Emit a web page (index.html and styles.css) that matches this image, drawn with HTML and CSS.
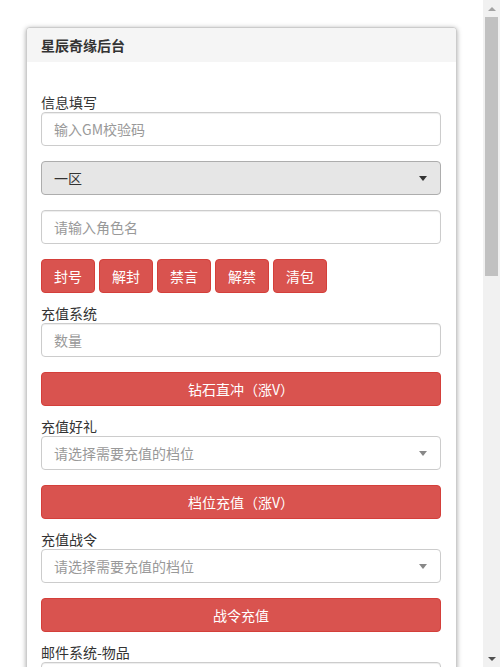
FILE: index.html
```html
<!DOCTYPE html>
<html lang="zh-CN">
<head>
<meta charset="utf-8">
<title>星辰奇缘后台</title>
<link rel="stylesheet" href="styles.css">
</head>
<body>
<div class="wrap">
  <div class="panel">
    <div class="panel-heading">星辰奇缘后台</div>
    <div class="panel-body">
      <label class="lbl">信息填写</label>
      <input class="ctl" type="text" placeholder="输入GM校验码">
      <div class="sel sel-gray"><span>一区</span><i class="caret dark"></i></div>
      <input class="ctl" type="text" placeholder="请输入角色名">
      <div class="btn-row">
        <button class="btn">封号</button>
        <button class="btn">解封</button>
        <button class="btn">禁言</button>
        <button class="btn">解禁</button>
        <button class="btn">清包</button>
      </div>
      <label class="lbl">充值系统</label>
      <input class="ctl" type="text" placeholder="数量">
      <button class="btn btn-block">钻石直冲（涨V）</button>
      <label class="lbl">充值好礼</label>
      <div class="sel"><span class="ph">请选择需要充值的档位</span><i class="caret light"></i></div>
      <button class="btn btn-block">档位充值（涨V）</button>
      <label class="lbl">充值战令</label>
      <div class="sel"><span class="ph">请选择需要充值的档位</span><i class="caret light"></i></div>
      <button class="btn btn-block">战令充值</button>
      <label class="lbl">邮件系统-物品</label>
      <input class="ctl" type="text" placeholder="请输入物品ID">
      <input class="ctl" type="text" placeholder="数量">
      <button class="btn btn-block">发送物品</button>
    </div>
  </div>
</div>
<div class="scrollbar" aria-hidden="true">
  <div class="sb-btn sb-up"><i></i></div>
  <div class="sb-track"><div class="sb-thumb"></div></div>
  <div class="sb-btn sb-down"><i></i></div>
</div>
</body>
</html>
```
FILE: styles.css
```css
html, body {
  margin: 0;
  padding: 0;
  background: #fff;
  font-family: "Noto Sans CJK SC", "Microsoft YaHei", sans-serif;
  font-size: 14px;
  color: #333;
}
.wrap {
  padding: 27px 43px 40px 26px;
}
.panel {
  border: 1px solid #ccc;
  border-radius: 4px;
  box-shadow: 0 1px 5px rgba(0,0,0,.35);
  background: #fff;
  overflow: hidden;
}
.panel-heading {
  background: #f5f5f5;
  height: 34px;
  line-height: 34px;
  padding: 0 14px;
  font-weight: bold;
  font-size: 14px;
  color: #333;
}
.panel-body {
  padding: 31px 15px 15px 14px;
  display: flex;
  flex-direction: column;
}
.lbl {
  display: block;
  line-height: 19px;
  height: 19px;
  margin: -4px 0 0 0;
  color: #333;
}
.panel-body > .lbl:first-child { margin-top: 0; }
.ctl, .sel, .btn-row, .btn-block {
  margin-bottom: 15px;
}
.ctl {
  box-sizing: border-box;
  height: 34px;
  width: 100%;
  border: 1px solid #ccc;
  border-radius: 4px;
  padding: 0 12px;
  font: inherit;
  font-size: 14px;
  color: #555;
  outline: none;
  box-shadow: inset 0 1px 1px rgba(0,0,0,.075);
}
.ctl::placeholder { color: #999; }
.sel {
  box-sizing: border-box;
  height: 34px;
  border: 1px solid #ccc;
  border-radius: 4px;
  padding: 0 12px;
  display: flex;
  align-items: center;
  justify-content: space-between;
  background: #fff;
}
.sel-gray {
  background: #e6e6e6;
  border-color: #adadad;
  color: #333;
}
.sel .ph { color: #999; }
.caret {
  width: 0;
  height: 0;
  border-left: 4px solid transparent;
  border-right: 4px solid transparent;
  margin-right: 1px;
}
.caret.dark { border-top: 5px solid #333; }
.caret.light { border-top: 5px solid #888; }
.btn-row {
  display: flex;
  gap: 4px;
}
.btn {
  box-sizing: border-box;
  height: 34px;
  width: 54px;
  background: #d9534f;
  border: 1px solid #d43f3a;
  border-radius: 4px;
  color: #fff;
  font: inherit;
  font-size: 14px;
  padding: 0;
  cursor: pointer;
}
.btn-block {
  width: 100%;
}

/* browser scrollbar rendering */
.scrollbar {
  position: fixed;
  top: 0;
  right: 0;
  width: 17px;
  height: 100vh;
  background: #f1f1f1;
  display: flex;
  flex-direction: column;
}
.sb-btn {
  height: 17px;
  flex: none;
  display: flex;
  align-items: center;
  justify-content: center;
}
.sb-btn i {
  width: 0;
  height: 0;
  border-left: 4px solid transparent;
  border-right: 4px solid transparent;
}
.sb-up i { border-bottom: 4px solid #a3a3a3; }
.sb-down i { border-top: 4px solid #505050; }
.sb-track {
  flex: 1;
  padding: 0 2px;
}
.sb-thumb {
  height: 259px;
  background: #c1c1c1;
}
```
